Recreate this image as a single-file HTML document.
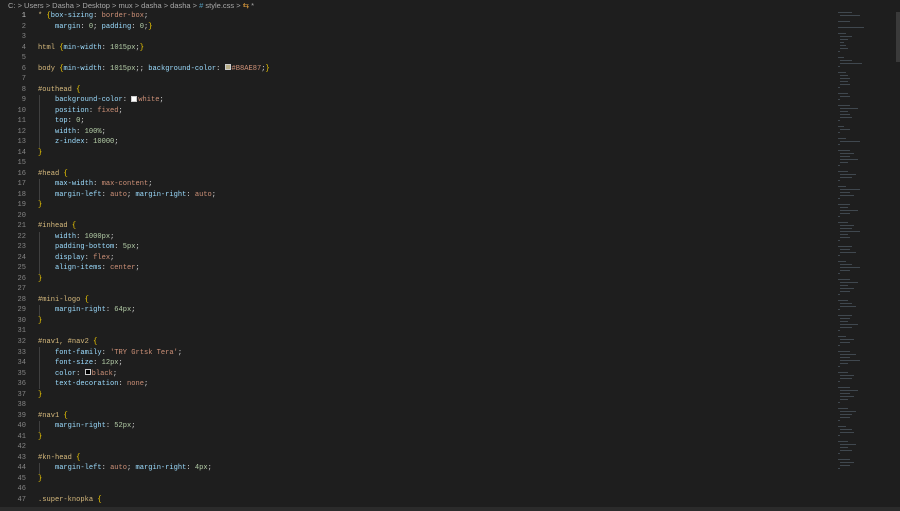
<!DOCTYPE html>
<html><head><meta charset="utf-8"><style>
*{margin:0;padding:0;box-sizing:border-box}
body{width:900px;height:511px;background:#1e1e1e;overflow:hidden;position:relative;font-family:"Liberation Mono",monospace;}
.bc{position:absolute;left:8px;top:1px;font:7.5px "Liberation Sans",sans-serif;color:#a9a9a9;white-space:pre;line-height:10px}
.ln{position:absolute;left:0;width:26px;text-align:right;color:#858585;font-size:7.07px;line-height:10.52px}
.ln div{height:10.52px}
.code{position:absolute;left:38px;font-size:7.07px;line-height:10.52px;color:#d4d4d4}
.row{height:10.52px;white-space:pre}
.s{color:#d7ba7d}.p{color:#9cdcfe}.v{color:#ce9178}.n{color:#b5cea8}.b{color:#ffd700}
.sw{display:inline-block;width:6px;height:6px;border:1px solid #ccc;vertical-align:-0.5px;margin-right:1px}
.guide{position:absolute;left:39px;width:1px;background:#404040}
.mm{position:absolute;left:838px;top:12px;width:40px;height:490px;overflow:hidden}
.mm div{height:1px;margin-bottom:2px;background:#6b7d8c;opacity:.45}
</style></head><body>
<div class="bc">C: &gt; Users &gt; Dasha &gt; Desktop &gt; mux &gt; dasha &gt; dasha &gt; <span style="color:#519aba">#</span> style.css &gt; <span style="color:#e8a33d">⇆</span> *</div>
<div class="guide" style="top:95px;height:53px"></div>
<div class="guide" style="top:179px;height:21px"></div>
<div class="guide" style="top:232px;height:42px"></div>
<div class="guide" style="top:305px;height:11px"></div>
<div class="guide" style="top:347px;height:42px"></div>
<div class="guide" style="top:421px;height:11px"></div>
<div class="guide" style="top:463px;height:11px"></div>
<div class="ln" style="top:11px"><div style="color:#c6c6c6">1</div><div>2</div><div>3</div><div>4</div><div>5</div><div>6</div><div>7</div><div>8</div><div>9</div><div>10</div><div>11</div><div>12</div><div>13</div><div>14</div><div>15</div><div>16</div><div>17</div><div>18</div><div>19</div><div>20</div><div>21</div><div>22</div><div>23</div><div>24</div><div>25</div><div>26</div><div>27</div><div>28</div><div>29</div><div>30</div><div>31</div><div>32</div><div>33</div><div>34</div><div>35</div><div>36</div><div>37</div><div>38</div><div>39</div><div>40</div><div>41</div><div>42</div><div>43</div><div>44</div><div>45</div><div>46</div><div>47</div></div>
<div class="code" style="top:11px">
<div class="row"><span class="s">*</span> <span class="b">{</span><span class="p">box-sizing</span>: <span class="v">border-box</span>;</div>
<div class="row">    <span class="p">margin</span>: <span class="n">0</span>; <span class="p">padding</span>: <span class="n">0</span>;<span class="b">}</span></div>
<div class="row"> </div>
<div class="row"><span class="s">html</span> <span class="b">{</span><span class="p">min-width</span>: <span class="n">1015px</span>;<span class="b">}</span></div>
<div class="row"> </div>
<div class="row"><span class="s">body</span> <span class="b">{</span><span class="p">min-width</span>: <span class="n">1015px</span>;; <span class="p">background-color</span>: <span class="sw" style="background:#b8ae87"></span><span class="v">#B8AE87</span>;<span class="b">}</span></div>
<div class="row"> </div>
<div class="row"><span class="s">#outhead</span> <span class="b">{</span></div>
<div class="row">    <span class="p">background-color</span>: <span class="sw" style="background:#fff"></span><span class="v">white</span>;</div>
<div class="row">    <span class="p">position</span>: <span class="v">fixed</span>;</div>
<div class="row">    <span class="p">top</span>: <span class="n">0</span>;</div>
<div class="row">    <span class="p">width</span>: <span class="n">100%</span>;</div>
<div class="row">    <span class="p">z-index</span>: <span class="n">10000</span>;</div>
<div class="row"><span class="b">}</span></div>
<div class="row"> </div>
<div class="row"><span class="s">#head</span> <span class="b">{</span></div>
<div class="row">    <span class="p">max-width</span>: <span class="v">max-content</span>;</div>
<div class="row">    <span class="p">margin-left</span>: <span class="v">auto</span>; <span class="p">margin-right</span>: <span class="v">auto</span>;</div>
<div class="row"><span class="b">}</span></div>
<div class="row"> </div>
<div class="row"><span class="s">#inhead</span> <span class="b">{</span></div>
<div class="row">    <span class="p">width</span>: <span class="n">1000px</span>;</div>
<div class="row">    <span class="p">padding-bottom</span>: <span class="n">5px</span>;</div>
<div class="row">    <span class="p">display</span>: <span class="v">flex</span>;</div>
<div class="row">    <span class="p">align-items</span>: <span class="v">center</span>;</div>
<div class="row"><span class="b">}</span></div>
<div class="row"> </div>
<div class="row"><span class="s">#mini-logo</span> <span class="b">{</span></div>
<div class="row">    <span class="p">margin-right</span>: <span class="n">64px</span>;</div>
<div class="row"><span class="b">}</span></div>
<div class="row"> </div>
<div class="row"><span class="s">#nav1, #nav2</span> <span class="b">{</span></div>
<div class="row">    <span class="p">font-family</span>: <span class="v">'TRY Grtsk Tera'</span>;</div>
<div class="row">    <span class="p">font-size</span>: <span class="n">12px</span>;</div>
<div class="row">    <span class="p">color</span>: <span class="sw" style="background:#000"></span><span class="v">black</span>;</div>
<div class="row">    <span class="p">text-decoration</span>: <span class="v">none</span>;</div>
<div class="row"><span class="b">}</span></div>
<div class="row"> </div>
<div class="row"><span class="s">#nav1</span> <span class="b">{</span></div>
<div class="row">    <span class="p">margin-right</span>: <span class="n">52px</span>;</div>
<div class="row"><span class="b">}</span></div>
<div class="row"> </div>
<div class="row"><span class="s">#kn-head</span> <span class="b">{</span></div>
<div class="row">    <span class="p">margin-left</span>: <span class="v">auto</span>; <span class="p">margin-right</span>: <span class="n">4px</span>;</div>
<div class="row"><span class="b">}</span></div>
<div class="row"> </div>
<div class="row"><span class="s">.super-knopka</span> <span class="b">{</span></div>
</div>
<div class="mm">
<div style="width:14px"></div><div style="width:20px;margin-left:2px"></div><div style="width:0"></div><div style="width:12px"></div><div style="width:0"></div><div style="width:26px"></div><div style="width:0"></div><div style="width:8px"></div><div style="width:12px;margin-left:2px"></div><div style="width:8px;margin-left:2px"></div><div style="width:4px;margin-left:2px"></div><div style="width:6px;margin-left:2px"></div><div style="width:8px;margin-left:2px"></div><div style="width:2px"></div><div style="width:0"></div><div style="width:6px"></div><div style="width:12px;margin-left:2px"></div><div style="width:22px;margin-left:2px"></div><div style="width:2px"></div><div style="width:0"></div><div style="width:8px"></div><div style="width:8px;margin-left:2px"></div><div style="width:10px;margin-left:2px"></div><div style="width:8px;margin-left:2px"></div><div style="width:10px;margin-left:2px"></div><div style="width:2px"></div><div style="width:0"></div><div style="width:10px"></div><div style="width:10px;margin-left:2px"></div><div style="width:2px"></div><div style="width:0"></div><div style="width:12px"></div><div style="width:18px;margin-left:2px"></div><div style="width:8px;margin-left:2px"></div><div style="width:10px;margin-left:2px"></div><div style="width:12px;margin-left:2px"></div><div style="width:2px"></div><div style="width:0"></div><div style="width:6px"></div><div style="width:10px;margin-left:2px"></div><div style="width:2px"></div><div style="width:0"></div><div style="width:8px"></div><div style="width:20px;margin-left:2px"></div><div style="width:2px"></div><div style="width:0"></div><div style="width:12px"></div><div style="width:14px;margin-left:2px"></div><div style="width:10px;margin-left:2px"></div><div style="width:18px;margin-left:2px"></div><div style="width:8px;margin-left:2px"></div><div style="width:2px"></div><div style="width:0"></div><div style="width:10px"></div><div style="width:16px;margin-left:2px"></div><div style="width:12px;margin-left:2px"></div><div style="width:2px"></div><div style="width:0"></div><div style="width:8px"></div><div style="width:20px;margin-left:2px"></div><div style="width:10px;margin-left:2px"></div><div style="width:14px;margin-left:2px"></div><div style="width:2px"></div><div style="width:0"></div><div style="width:12px"></div><div style="width:8px;margin-left:2px"></div><div style="width:18px;margin-left:2px"></div><div style="width:10px;margin-left:2px"></div><div style="width:2px"></div><div style="width:0"></div><div style="width:10px"></div><div style="width:14px;margin-left:2px"></div><div style="width:12px;margin-left:2px"></div><div style="width:20px;margin-left:2px"></div><div style="width:8px;margin-left:2px"></div><div style="width:10px;margin-left:2px"></div><div style="width:2px"></div><div style="width:0"></div><div style="width:14px"></div><div style="width:10px;margin-left:2px"></div><div style="width:16px;margin-left:2px"></div><div style="width:2px"></div><div style="width:0"></div><div style="width:8px"></div><div style="width:12px;margin-left:2px"></div><div style="width:20px;margin-left:2px"></div><div style="width:10px;margin-left:2px"></div><div style="width:2px"></div><div style="width:0"></div><div style="width:12px"></div><div style="width:18px;margin-left:2px"></div><div style="width:8px;margin-left:2px"></div><div style="width:14px;margin-left:2px"></div><div style="width:10px;margin-left:2px"></div><div style="width:2px"></div><div style="width:0"></div><div style="width:10px"></div><div style="width:12px;margin-left:2px"></div><div style="width:16px;margin-left:2px"></div><div style="width:2px"></div><div style="width:0"></div><div style="width:14px"></div><div style="width:10px;margin-left:2px"></div><div style="width:8px;margin-left:2px"></div><div style="width:18px;margin-left:2px"></div><div style="width:12px;margin-left:2px"></div><div style="width:2px"></div><div style="width:0"></div><div style="width:8px"></div><div style="width:14px;margin-left:2px"></div><div style="width:10px;margin-left:2px"></div><div style="width:2px"></div><div style="width:0"></div><div style="width:12px"></div><div style="width:16px;margin-left:2px"></div><div style="width:10px;margin-left:2px"></div><div style="width:20px;margin-left:2px"></div><div style="width:8px;margin-left:2px"></div><div style="width:2px"></div><div style="width:0"></div><div style="width:10px"></div><div style="width:14px;margin-left:2px"></div><div style="width:12px;margin-left:2px"></div><div style="width:2px"></div><div style="width:0"></div><div style="width:12px"></div><div style="width:18px;margin-left:2px"></div><div style="width:10px;margin-left:2px"></div><div style="width:14px;margin-left:2px"></div><div style="width:8px;margin-left:2px"></div><div style="width:2px"></div><div style="width:0"></div><div style="width:10px"></div><div style="width:16px;margin-left:2px"></div><div style="width:12px;margin-left:2px"></div><div style="width:10px;margin-left:2px"></div><div style="width:2px"></div><div style="width:0"></div><div style="width:8px"></div><div style="width:12px;margin-left:2px"></div><div style="width:14px;margin-left:2px"></div><div style="width:2px"></div><div style="width:0"></div><div style="width:10px"></div><div style="width:16px;margin-left:2px"></div><div style="width:8px;margin-left:2px"></div><div style="width:12px;margin-left:2px"></div><div style="width:2px"></div><div style="width:0"></div><div style="width:12px"></div><div style="width:14px;margin-left:2px"></div><div style="width:10px;margin-left:2px"></div><div style="width:2px"></div>
</div>
<div style="position:absolute;left:896px;top:12px;width:4px;height:50px;background:#3a3a3a"></div>
<div style="position:absolute;left:0;top:507px;width:900px;height:4px;background:#2b2b2b"></div>
</body></html>
